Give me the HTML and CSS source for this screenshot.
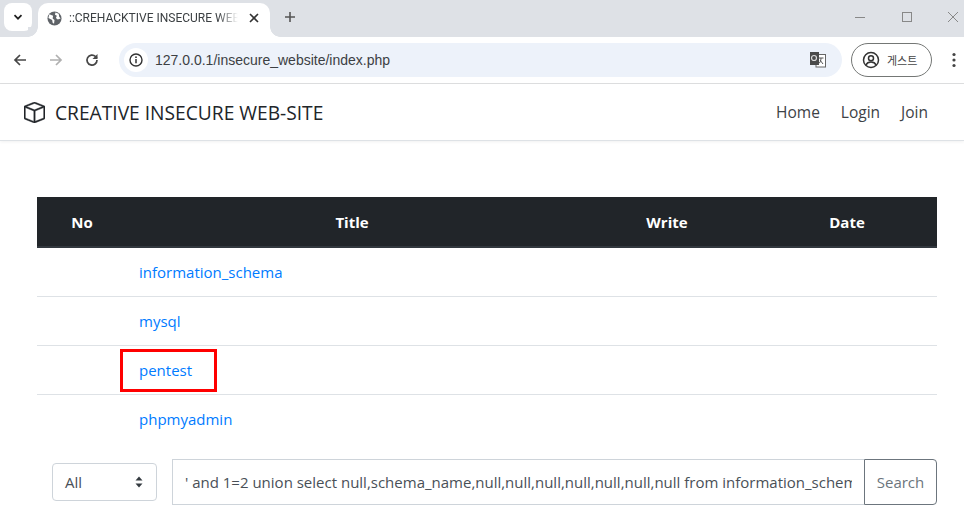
FILE: index.html
```html
<!DOCTYPE html>
<html lang="ko">
<head>
<meta charset="utf-8">
<title>::CREHACKTIVE INSECURE WEB-SITE::</title>
<link rel="stylesheet" href="styles.css">
</head>
<body>
<div class="chrome">
  <div class="tabstrip">
    <div class="tabsearch">
      <svg width="12" height="12" viewBox="0 0 12 12"><path d="M2.5 4.2 6 7.7l3.5-3.5" fill="none" stroke="#1f1f1f" stroke-width="1.7"/></svg>
    </div>
    <div class="tab">
      <svg class="favicon" width="15" height="15" viewBox="0 0 16 16"><circle cx="8" cy="8" r="7.500" fill="#5f6368"/><path d="M2.500 3.500 6.500 5 6 8 8 9.500 7.500 13.500 6 12.500 5.500 9.500 1.500 7.500ZM9 1.500l3.500 1.500L13 6l1.500 2-3 1L9.500 7.500 10.500 5 8.500 4Z" fill="#fff"/></svg>
      <span class="tabtitle">::CREHACKTIVE INSECURE WEB-SITE::</span>
      <svg class="tabclose" width="10" height="10" viewBox="0 0 10 10"><path d="M1 1l8 8M9 1 1 9" stroke="#333" stroke-width="1.6"/></svg>
    </div>
    <svg class="newtab" width="12" height="12" viewBox="0 0 12 12"><path d="M6 1v10M1 6h10" stroke="#555" stroke-width="1.6"/></svg>
    <div class="winctl">
      <svg width="12" height="12" viewBox="0 0 12 12"><path d="M1 6.500h10" stroke="#888" stroke-width="1"/></svg>
      <svg width="12" height="12" viewBox="0 0 12 12"><rect x="1.500" y="1.500" width="9" height="9" fill="none" stroke="#888"/></svg>
      <svg width="12" height="12" viewBox="0 0 12 12"><path d="M1 1l10 10M11 1 1 11" stroke="#888" stroke-width="1"/></svg>
    </div>
  </div>
  <div class="toolbar">
    <div class="navbtns">
      <svg width="16" height="16" viewBox="0 0 16 16"><path d="M14 8H3M8 3 3 8l5 5" fill="none" stroke="#474747" stroke-width="1.700"/></svg>
      <svg width="16" height="16" viewBox="0 0 16 16"><path d="M2 8h11M8 3l5 5-5 5" fill="none" stroke="#b0b0b0" stroke-width="1.700"/></svg>
      <svg width="16" height="16" viewBox="0 0 16 16"><path d="M13 8a5 5 0 1 1-1.500-3.500L13 6" fill="none" stroke="#474747" stroke-width="1.700"/><path d="M13.500 2v5h-5z" fill="#474747"/></svg>
    </div>
    <div class="omnibox">
      <div class="siteinfo">
        <svg width="14" height="14" viewBox="0 0 14 14"><circle cx="7" cy="7" r="6" fill="none" stroke="#333" stroke-width="1.400"/><path d="M7 6v4.200" stroke="#333" stroke-width="1.500"/><circle cx="7" cy="4.200" r=".9" fill="#333"/></svg>
      </div>
      <span class="url">127.0.0.1/insecure_website/index.php</span>
      <svg class="translate" width="17" height="17" viewBox="0 0 17 17"><rect x="7" y="3.500" width="9.500" height="12.500" fill="#fff" stroke="#666"/><path d="M1 1h9v13H1z" fill="#4a4a4a"/><circle cx="5" cy="7" r="2.500" fill="none" stroke="#ddd" stroke-width="1.200"/><path d="M9.500 7h5M12 7c0 3-1 5-3 6M11 9l3 4" fill="none" stroke="#555"/></svg>
    </div>
    <div class="profile">
      <svg width="18" height="18" viewBox="0 0 18 18"><circle cx="9" cy="9" r="7.500" fill="none" stroke="#333" stroke-width="1.500"/><circle cx="9" cy="7.200" r="2.500" fill="none" stroke="#333" stroke-width="1.500"/><path d="M4 14c1-2.500 3-3 5-3s4 .5 5 3" fill="none" stroke="#333" stroke-width="1.500"/></svg>
      <span class="guest">게스트</span>
    </div>
    <svg class="kebab" width="4" height="16" viewBox="0 0 4 16"><circle cx="2" cy="2.500" r="1.600" fill="#444"/><circle cx="2" cy="8" r="1.600" fill="#444"/><circle cx="2" cy="13.500" r="1.600" fill="#444"/></svg>
  </div>
</div>

<nav class="navbar">
  <a class="brand" href="#">
    <svg width="21" height="21" viewBox="0 0 16 16"><path fill="#212529" stroke="#212529" stroke-width=".35" d="M8.186 1.113a.5.5 0 0 0-.372 0L1.846 3.5 8 5.961 14.154 3.5 8.186 1.113zM15 4.239l-6.500 2.600v7.922l6.500-2.600V4.240zM7.500 14.762V6.838L1 4.239v7.925l6.500 2.600zM7.443.184a1.500 1.500 0 0 1 1.114 0l7.129 2.852A.5.5 0 0 1 16 3.500v8.662a1 1 0 0 1-.629.928l-7.185 2.874a.5.5 0 0 1-.372 0L.63 13.090a1 1 0 0 1-.63-.928V3.500a.5.500 0 0 1 .314-.464L7.443.184z"/></svg>
    <span>CREATIVE INSECURE WEB-SITE</span>
  </a>
  <div class="navlinks">
    <a href="#">Home</a>
    <a href="#">Login</a>
    <a href="#">Join</a>
  </div>
</nav>

<main class="container">
  <table class="board">
    <thead>
      <tr><th class="c-no">No</th><th class="c-title">Title</th><th class="c-write">Write</th><th class="c-date">Date</th></tr>
    </thead>
    <tbody>
      <tr><td></td><td><a href="#">information_schema</a></td><td></td><td></td></tr>
      <tr><td></td><td><a href="#">mysql</a></td><td></td><td></td></tr>
      <tr><td></td><td><a href="#">pentest</a></td><td></td><td></td></tr>
      <tr><td></td><td><a href="#">phpmyadmin</a></td><td></td><td></td></tr>
    </tbody>
  </table>
  <form class="search">
    <div class="select">All
      <svg width="8" height="12" viewBox="0 0 8 12"><path d="M4 .5 7.500 4.500H.5zM4 11.500.5 7.500h7z" fill="#343a40"/></svg>
    </div>
    <div class="group">
      <input class="query" type="text" value="' and 1=2 union select null,schema_name,null,null,null,null,null,null,null from information_schema.schemata#">
      <button class="btn" type="button">Search</button>
    </div>
  </form>
</main>
<div class="redbox"></div>
</body>
</html>
```

FILE: styles.css
```css
* { box-sizing: border-box; }
html, body { margin: 0; padding: 0; }
body {
  width: 964px;
  height: 531px;
  overflow: hidden;
  background: #fff;
  color: #212529;
  font-family: "Open Sans", "Noto Sans", sans-serif;
  font-size: 15px;
  position: relative;
}
a { text-decoration: none; }

.chrome { height: 84px; border-bottom: 1px solid #dedfe0; }
.tabstrip {
  height: 37px;
  background: #dee1e6;
  display: flex;
  align-items: flex-start;
  padding: 3px 0 0 4px;
}
.tabsearch {
  width: 28px;
  height: 28px;
  background: #fff;
  border-radius: 8px;
  display: flex;
  align-items: center;
  justify-content: center;
}
.tab {
  position: relative;
  width: 232px;
  height: 34px;
  margin-left: 6px;
  background: #fff;
  border-radius: 10px 10px 0 0;
  display: flex;
  align-items: center;
  padding: 0 11px 4px 9px;
}
.tab::before,
.tab::after {
  content: "";
  position: absolute;
  bottom: 0;
  width: 10px;
  height: 10px;
}
.tab::before {
  left: -10px;
  background: radial-gradient(circle at 0 0, #dee1e6 9.500px, #fff 10px);
}
.tab::after {
  right: -10px;
  background: radial-gradient(circle at 100% 0, #dee1e6 9.500px, #fff 10px);
}
.favicon { flex: none; }
.tabtitle {
  margin-left: 7px;
  width: 172px;
  white-space: nowrap;
  overflow: hidden;
  font-family: "Roboto", sans-serif;
  font-size: 12px;
  color: #3c4043;
  -webkit-mask-image: linear-gradient(to right, #000 88%, transparent);
  mask-image: linear-gradient(to right, #000 88%, transparent);
}
.tabclose { margin-left: 11px; flex: none; }
.newtab { margin: 8px 0 0 14px; }
.winctl {
  margin-left: auto;
  margin-top: 8px;
  width: 105px;
  display: flex;
  justify-content: space-between;
  margin-right: 5px;
}
.winctl svg { flex: none; }

.toolbar {
  height: 46px;
  background: #fff;
  display: flex;
  align-items: center;
  padding: 0 0 1px 12px;
}
.navbtns { display: flex; gap: 20px; width: 107px; flex: none; }
.omnibox {
  width: 723px;
  height: 34px;
  border-radius: 17px;
  background: #edf2fa;
  display: flex;
  align-items: center;
  padding: 0 16px 0 5px;
}
.siteinfo {
  width: 24px;
  height: 24px;
  border-radius: 50%;
  background: #fff;
  display: flex;
  align-items: center;
  justify-content: center;
  flex: none;
}
.url {
  margin-left: 7px;
  font-family: "Liberation Sans", sans-serif;
  font-size: 14px;
  color: #3c4043;
}
.translate { margin-left: auto; }
.profile {
  width: 81px;
  height: 34px;
  margin-left: 9px;
  border: 1px solid #747775;
  border-radius: 17px;
  display: flex;
  align-items: center;
  gap: 7px;
  padding-left: 10px;
  flex: none;
}
.guest {
  font-family: "Noto Sans CJK KR", sans-serif;
  font-size: 11px;
  color: #444;
}
.kebab { margin-left: 20px; flex: none; }

.navbar {
  height: 57px;
  border-bottom: 1px solid #dee2e6;
  box-shadow: 0 1px 3px rgba(0, 0, 0, .06);
  display: flex;
  align-items: center;
  padding: 0 36px 0 24px;
}
.brand {
  display: flex;
  align-items: center;
  gap: 10px;
  color: #212529;
  font-size: 19.200px;
}
.navlinks { margin-left: auto; display: flex; gap: 21px; }
.navlinks a { color: #3d4246; font-size: 15.500px; }

.container { width: 900px; margin: 56px 0 0 37px; }
.board { width: 900px; border-collapse: collapse; table-layout: fixed; }
.board th {
  height: 50px;
  padding: 0;
  background: #212529;
  color: #fff;
  font-size: 15px;
  font-weight: 700;
  text-align: center;
  border-bottom: 2px solid #32383e;
}
.c-no { width: 90px; }
.c-title { width: 450px; }
.c-write { width: 180px; }
.c-date { width: 180px; }
.board td {
  height: 49px;
  padding: 0 12px;
  border-bottom: 1px solid #dee2e6;
}
.board tr:last-child td { border-bottom: 0; }
.board a { color: #007bff; font-size: 15px; }

.search {
  display: flex;
  align-items: center;
  gap: 15px;
  margin: 16px 0 0 15px;
}
.select {
  width: 105px;
  height: 38px;
  border: 1px solid #ced4da;
  border-radius: 4px;
  display: flex;
  align-items: center;
  justify-content: space-between;
  padding: 0 13px 0 12px;
  color: #495057;
  flex: none;
}
.group { display: flex; flex: 1; height: 46px; }
.query {
  width: 692px;
  height: 46px;
  border: 1px solid #ced4da;
  border-right: 0;
  padding: 0 12px;
  font: inherit;
  color: #495057;
  outline: 0;
}
.btn {
  width: 73px;
  height: 46px;
  border: 1px solid #6c757d;
  border-radius: 0 4px 4px 0;
  background: #fff;
  font: inherit;
  color: #6c757d;
  padding: 0;
}
.redbox {
  position: absolute;
  left: 120px;
  top: 349px;
  width: 97px;
  height: 43px;
  border: 3px solid #f00;
}
```
